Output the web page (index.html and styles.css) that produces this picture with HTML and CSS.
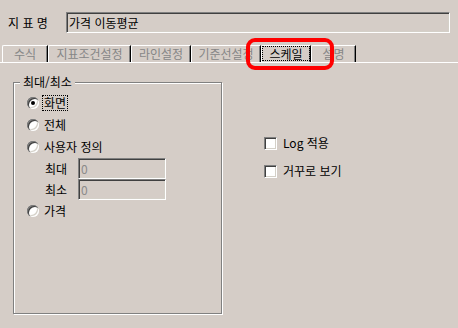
FILE: index.html
```html
<!doctype html>
<html lang="ko">
<head>
  <meta charset="utf-8" />
  <title>지표 설정 - 스케일</title>
  <link rel="stylesheet" href="styles.css">
</head>
<body>
  <div class="dlg">
    <div class="namebar">
      <span class="namelbl">지 표 명</span>
      <div class="field name">가격 이동평균</div>
    </div>

    <div class="tabs">
      <div class="tab" style="width:46px">수식</div>
      <div class="tab" style="width:83px">지표조건설정</div>
      <div class="tab" style="width:60px">라인설정</div>
      <div class="tab" style="width:70px">기준선설정</div>
      <div class="tab active" style="width:50px">스케일</div>
      <div class="tab" style="width:45px">설명</div>
      <!-- 강조 표시 -->
      <div class="mark"></div>
    </div>

    <div class="page">
      <div class="group">
        <span class="legend">최대/최소</span>
        <div class="row"><span class="radio on"></span><span class="focus">화면</span></div>
        <div class="row"><span class="radio"></span><span>전체</span></div>
        <div class="row"><span class="radio"></span><span>사용자 정의</span></div>
        <div class="sub"><span class="sublbl">최대</span><div class="field off">0</div></div>
        <div class="sub"><span class="sublbl">최소</span><div class="field off">0</div></div>
        <div class="row"><span class="radio"></span><span>가격</span></div>
      </div>

      <div class="opts">
        <div class="chk"><span class="box"></span><span>Log 적용</span></div>
        <div class="chk"><span class="box"></span><span>거꾸로 보기</span></div>
      </div>
    </div>
  </div>
</body>
</html>
```

FILE: styles.css
```css
:root { --bg:#d5cdc7; --dark:#404040; --shade:#808080; }
html, body {
  margin:0; height:100%;
  background:var(--bg); color:#000;
  font-family:"Noto Sans CJK KR", "Liberation Sans", sans-serif;
  font-size:12px; line-height:14px;
}
.dlg { position:relative; width:458px; height:328px; overflow:hidden; }

/* sunken edit box */
.field {
  box-sizing:border-box; height:21px;
  border:1px solid; border-color:var(--shade) #fff #fff var(--shade);
  box-shadow:inset 1px 1px 0 var(--dark), inset -1px -1px 0 #d4d0c8;
  padding:3px 0 0 2px;
}

.namebar { display:flex; align-items:center; padding:12px 0 0 8px; }
.namelbl { width:58px; }
.field.name { width:384px; background:var(--bg); }

/* tabs */
.tabs {
  position:relative;
  display:flex; margin-top:12px; padding-left:2px;
  border-bottom:1px solid #fff; height:17px;
}
.tab {
  box-sizing:border-box; height:17px;
  border-top:1px solid #fff; border-left:1px solid #fff;
  border-right:1px solid #000;
  border-top-left-radius:2px;
  box-shadow:inset -1px 0 0 var(--shade);
  color:#868686; text-align:center; padding-top:1px;
}
.tab.active { color:#000; outline:1px dotted #000; outline-offset:-2px; }
.mark {
  position:absolute; left:246px; top:-7px;
  width:80px; height:24px;
  border:4px solid #f00; border-radius:9px;
}

/* scale page */
.page { display:flex; padding:19px 0 0 13px; }
.group {
  position:relative; box-sizing:border-box;
  width:209px; height:232px;
  border:1px solid var(--shade);
  box-shadow:inset 1px 1px 0 #fff, 1px 1px 0 #fff;
  padding:9px 0 0 13px;
}
.legend {
  position:absolute; left:6px; top:-8px;
  background:var(--bg); padding:0 3px;
}
.row { display:flex; align-items:center; height:22px; }
.radio {
  position:relative; width:12px; height:12px; margin-right:5px;
  border-radius:50%; background:#fff;
  box-shadow:inset 1px 1px 0 var(--shade), inset 2px 2px 0 var(--dark),
    inset -1px -1px 0 #fff, inset -2px -2px 0 #d4d0c8;
}
.radio.on::after {
  content:""; position:absolute; left:4px; top:4px;
  width:4px; height:4px; border-radius:50%; background:#000;
}
.focus { outline:1px dotted #000; padding:0 1px; margin-left:-1px; }
.sub { display:flex; align-items:center; padding-left:18px; }
.sublbl { width:33px; }
.field.off { width:88px; color:#8a8a8a; background:var(--bg); }

.opts { padding:54px 0 0 42px; display:flex; flex-direction:column; gap:14px; }
.chk { display:flex; align-items:center; }
.box {
  box-sizing:border-box; width:13px; height:13px; margin-right:6px;
  background:#fff;
  border:1px solid; border-color:var(--shade) #fff #fff var(--shade);
  box-shadow:inset 1px 1px 0 var(--dark), inset -1px -1px 0 #d4d0c8;
}
```
